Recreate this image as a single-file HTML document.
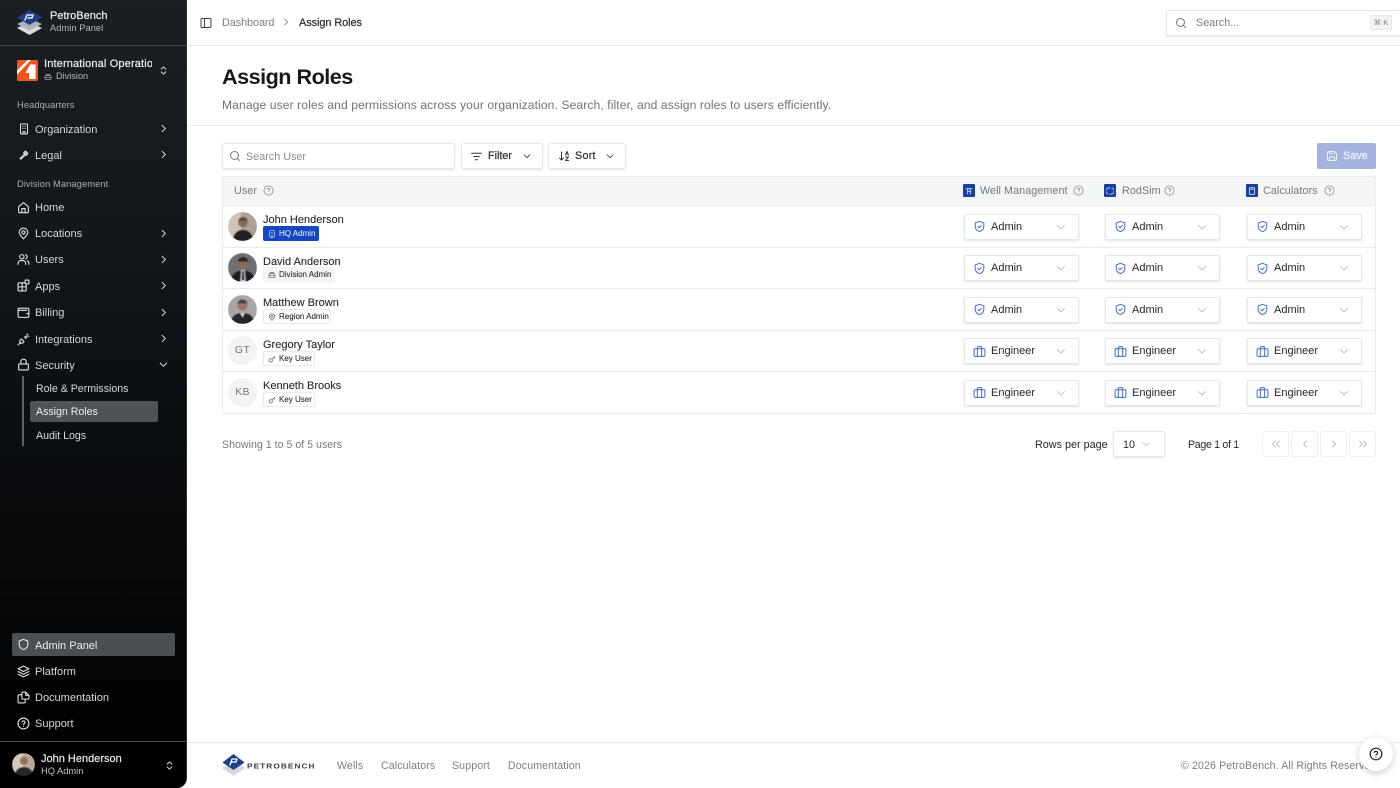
<!DOCTYPE html>
<html lang="en"><head><meta charset="utf-8"><title>Assign Roles</title>
<style>
*{box-sizing:border-box}
html,body{margin:0;padding:0;width:1400px;height:788px;overflow:hidden;background:#fff;font-family:"Liberation Sans",sans-serif;color:#17191c}
.a{position:absolute;white-space:nowrap}
svg{position:absolute;fill:none;stroke:currentColor;stroke-width:2;stroke-linecap:round;stroke-linejoin:round}
#side{position:absolute;left:0;top:0;width:187px;height:788px;background:linear-gradient(180deg,#1b1f24 0,#15191d 22%,#0d1013 50%,#040506 80%,#000 100%);border-right:1px solid #2c3035;border-bottom-right-radius:10px;color:#e2e4e6;overflow:hidden}
#side .n{font-size:11px;color:#d6d8da}
#side .s{font-size:10.600px;color:#d6d8da}
#side svg{color:#e4e6e8}
.m{-webkit-text-stroke:.2px currentColor}
.btn{position:absolute;background:#fff;border:1px solid #e6e8ea;border-radius:3px;box-shadow:0 1px 2px rgba(0,0,0,.1)}
.dd{position:absolute;width:115px;height:26px;background:#fff;border:1px solid #e4e6e8;border-radius:2px;box-shadow:0 1px 2px rgba(0,0,0,.12)}
.dd span{position:absolute;left:26px;top:6px;font-size:11px;color:#25282c}
.dd svg.i{left:8px;top:5.500px;width:13px;height:13px;color:#3f68c9;stroke-width:1.8}
.dd svg.c{left:90px;top:6px;width:12px;height:12px;color:#a9adb2;stroke-width:1.5}
.nm{position:absolute;left:263px;font-size:11px;color:#25282c;white-space:nowrap;-webkit-text-stroke:.1px currentColor}
.bd{position:absolute;left:263px;height:15px;border:1px solid #e8eaec;border-radius:2px;background:#fff;font-size:8px;color:#2b2e32;padding:2px 0 0 15px;white-space:nowrap;-webkit-text-stroke:.1px currentColor}
.bd svg{left:4px;top:3px;width:8px;height:8px;color:#555a60}
.ln{position:absolute;left:222px;width:1154px;height:1px;background:#e9ebec}
.av{position:absolute;left:228px;width:29px;height:29px;border-radius:50%;overflow:hidden}
.av svg{left:0;top:0;width:29px;height:29px;stroke:none;filter:blur(.5px)}
.ini{background:#f2f3f4;color:#73777c;font-size:10.500px;text-align:center;line-height:29px;letter-spacing:.3px}
.pg{position:absolute;top:431px;width:27px;height:26px;border:1px solid #eeeff1;border-radius:3px;background:#fff;color:#a5a8ad}
.pg svg{left:7px;top:6px;width:12px;height:12px;stroke-width:1.5}
.f{position:absolute;top:760px;font-size:10.600px;letter-spacing:.12px;color:#7a7e83;white-space:nowrap}
.th{position:absolute;top:185px;font-size:10.800px;letter-spacing:.05px;color:#75797e;white-space:nowrap}
.q{top:185px;width:11px;height:11px;color:#85898e;stroke-width:1.7}
.app{position:absolute;top:184px;width:12px;height:13px;background:#17409f;border-radius:1px}
.app svg{left:2px;top:2.500px;width:8px;height:8px;color:#dfe6f6;stroke-width:2.4}
</style></head><body>
<svg width="0" height="0" style="display:none">
<defs>
<symbol id="chev" viewBox="0 0 24 24"><path d="M9 5l7 7-7 7"/></symbol>
<symbol id="down" viewBox="0 0 24 24"><path d="M5 9l7 7 7-7"/></symbol>
<symbol id="updn" viewBox="0 0 24 24"><path d="M7 9l5-5 5 5M7 15l5 5 5-5"/></symbol>
<symbol id="shield" viewBox="0 0 24 24"><path d="M12 2.500l8 3v6c0 5-3.400 8.300-8 10-4.600-1.700-8-5-8-10v-6z"/><path d="M8.800 12l2.300 2.300 4.200-4.300"/></symbol>
<symbol id="brief" viewBox="0 0 24 24"><rect x="2" y="7" width="20" height="14" rx="2"/><path d="M8 21V5a2 2 0 0 1 2-2h4a2 2 0 0 1 2 2v16"/></symbol>
<symbol id="help" viewBox="0 0 24 24"><circle cx="12" cy="12" r="10"/><path d="M9 9.200a3 3 0 0 1 5.800 1c0 2-2.800 2.300-2.800 3.800"/><path d="M12 17.500h.01"/></symbol>
<symbol id="search" viewBox="0 0 24 24"><circle cx="11" cy="11" r="8"/><path d="M21 21l-4.300-4.300"/></symbol>
<symbol id="bld" viewBox="0 0 24 24"><rect x="5" y="2" width="14" height="20" rx="2"/><path d="M9 7h.01M12 7h.01M15 7h.01M9 11h.01M12 11h.01M15 11h.01M10 22v-5h4v5"/></symbol>
<symbol id="case" viewBox="0 0 24 24"><rect x="3" y="8" width="18" height="12" rx="2"/><path d="M7 8V6a2 2 0 0 1 2-2h6a2 2 0 0 1 2 2v2M3 13h18"/></symbol>
<symbol id="pin" viewBox="0 0 24 24"><path d="M12 22c5-5 8-8.500 8-12a8 8 0 0 0-16 0c0 3.500 3 7 8 12z"/><circle cx="12" cy="10" r="3"/></symbol>
<symbol id="key" viewBox="0 0 24 24"><circle cx="8" cy="16" r="5"/><path d="M12 12l8-8M17 7l3 3"/></symbol>
</defs></svg>

<div id="side">
  <svg style="left:16px;top:9px;width:27px;height:27px;stroke:none" viewBox="0 0 27 27"><path fill="#d9dcdf" d="M13.500 13L26 19 13.500 26 1 19z"/><path fill="#aeb3b8" d="M13.500 9L26 15 13.500 21.500 1 15z"/><path fill="#1d3f86" d="M13.500 1L26 8.500 13.500 16 1 8.500z"/><path fill="none" stroke="#e8ecf4" stroke-width="1.500" d="M9 11l2-5h6l-1 3h-4"/></svg>
  <div class="a m" style="left:50px;top:10px;font-size:11px;color:#eceef0">PetroBench</div>
  <div class="a" style="left:50px;top:23px;font-size:9.300px;letter-spacing:.05px;color:#b5b8bb">Admin Panel</div>
  <div style="position:absolute;left:0;top:45px;width:187px;height:1px;background:#44484c"></div>

  <svg style="left:17px;top:60px;width:21px;height:21px;stroke:none" viewBox="0 0 21 21"><rect width="21" height="21" rx="1.500" fill="#f0551c"/><path fill="#fff" d="M0 10.500L10.500 0H14L0 14.500z"/><path fill="#fff" d="M13 4.500h5.500V19H12v-6H8.500z"/></svg>
  <div class="a m" style="left:44px;top:58px;width:107.500px;overflow:hidden;font-size:11px;letter-spacing:.15px;color:#eceef0">International Operations</div>
  <svg style="left:44px;top:73px;width:8px;height:8px;color:#b5b8bb"><use href="#case"/></svg>
  <div class="a" style="left:56px;top:71px;font-size:9.200px;color:#b5b8bb">Division</div>
  <svg style="left:158px;top:64px;width:11px;height:13px"><use href="#updn"/></svg>

  <div class="a" style="left:17px;top:100px;font-size:9.300px;letter-spacing:.1px;color:#a9acb0">Headquarters</div>
  <svg style="left:18px;top:123px;width:12px;height:12px"><use href="#bld"/></svg><div class="a n" style="left:35px;top:123.500px">Organization</div><svg style="left:158px;top:123px;width:11px;height:11px"><use href="#chev"/></svg>
  <svg style="left:18px;top:149px;width:12px;height:12px" viewBox="0 0 24 24"><path d="M14 5l5 5M11 8l5 5M12 7l3-3 5 5-3 3zM13 10L4 19l1.500 1.500L15 12"/></svg><div class="a n" style="left:35px;top:150px">Legal</div><svg style="left:158px;top:149px;width:11px;height:11px"><use href="#chev"/></svg>

  <div class="a" style="left:17px;top:179px;font-size:9.300px;letter-spacing:.1px;color:#a9acb0">Division Management</div>
  <svg style="left:17px;top:201px;width:13px;height:13px" viewBox="0 0 24 24"><path d="M3 10.500L12 3l9 7.500V20a1.500 1.500 0 0 1-1.500 1.500h-15A1.500 1.500 0 0 1 3 20z"/><path d="M9 21v-7h6v7"/></svg><div class="a n" style="left:35px;top:202px">Home</div>
  <svg style="left:17px;top:227px;width:13px;height:13px"><use href="#pin"/></svg><div class="a n" style="left:35px;top:228px">Locations</div><svg style="left:158px;top:228px;width:11px;height:11px"><use href="#chev"/></svg>
  <svg style="left:17px;top:253px;width:13px;height:13px" viewBox="0 0 24 24"><circle cx="9" cy="7" r="4"/><path d="M2 21v-2a5 5 0 0 1 5-5h4a5 5 0 0 1 5 5v2M16 3.200a4 4 0 0 1 0 7.600M22 21v-2a5 5 0 0 0-3-4.500"/></svg><div class="a n" style="left:35px;top:254px">Users</div><svg style="left:158px;top:254px;width:11px;height:11px"><use href="#chev"/></svg>
  <svg style="left:17px;top:279px;width:13px;height:13px" viewBox="0 0 24 24"><rect x="2" y="7" width="15" height="15" rx="2"/><path d="M2 14.500h15M9.500 7v15"/><rect x="15" y="2" width="7" height="7" rx="1" fill="#15191d"/></svg><div class="a n" style="left:35px;top:281px">Apps</div><svg style="left:158px;top:280px;width:11px;height:11px"><use href="#chev"/></svg>
  <svg style="left:17px;top:306px;width:13px;height:13px" viewBox="0 0 24 24"><rect x="2" y="4" width="20" height="17" rx="2.500"/><path d="M2 8h16M22 14h-4"/></svg><div class="a n" style="left:35px;top:307px">Billing</div><svg style="left:158px;top:307px;width:11px;height:11px"><use href="#chev"/></svg>
  <svg style="left:17px;top:333px;width:13px;height:13px" viewBox="0 0 24 24"><path d="M2 22l5-5M8 11l5 5-2 2a3.500 3.500 0 0 1-5-5zM14 8l2-2 2 2-2 2M20 2l-2 2M22 6h-2"/></svg><div class="a n" style="left:35px;top:333.500px">Integrations</div><svg style="left:158px;top:333px;width:11px;height:11px"><use href="#chev"/></svg>
  <svg style="left:17px;top:358px;width:13px;height:13px" viewBox="0 0 24 24"><rect x="3" y="11" width="18" height="11" rx="2"/><path d="M7 11V7a5 5 0 0 1 10 0v4"/></svg><div class="a n" style="left:35px;top:360px">Security</div><svg style="left:158px;top:359px;width:11px;height:11px"><use href="#down"/></svg>
  <div style="position:absolute;left:22px;top:376px;width:2px;height:70px;background:#5d6166"></div>
  <div class="a s" style="left:36px;top:383px">Role &amp; Permissions</div>
  <div style="position:absolute;left:30px;top:401px;width:128px;height:21px;border-radius:2px;background:#4f5257"></div>
  <div class="a s" style="left:36px;top:406px;color:#eceef0">Assign Roles</div>
  <div class="a s" style="left:36px;top:430px">Audit Logs</div>

  <div style="position:absolute;left:12px;top:633px;width:163px;height:23px;border-radius:2px;background:#4b4f53"></div>
  <svg style="left:17px;top:638px;width:13px;height:13px" viewBox="0 0 24 24"><path d="M12 2.500l8 3v6c0 5-3.400 8.300-8 10-4.600-1.700-8-5-8-10v-6z"/></svg><div class="a n" style="left:35px;top:640px;color:#eceef0">Admin Panel</div>
  <svg style="left:17px;top:665px;width:13px;height:13px" viewBox="0 0 24 24"><path d="M12 2l10 5-10 5L2 7zM2 12l10 5 10-5M2 17l10 5 10-5"/></svg><div class="a n" style="left:35px;top:666px">Platform</div>
  <svg style="left:17px;top:691px;width:13px;height:13px" viewBox="0 0 24 24"><path d="M9 7H4a2 2 0 0 0-2 2v11a2 2 0 0 0 2 2h9a2 2 0 0 0 2-2v-5"/><path d="M9 4a2 2 0 0 1 2-2h5l6 6v5a2 2 0 0 1-2 2h-9a2 2 0 0 1-2-2zM16 2v6h6"/></svg><div class="a n" style="left:35px;top:692px">Documentation</div>
  <svg style="left:17px;top:717px;width:13px;height:13px"><use href="#help"/></svg><div class="a n" style="left:35px;top:718px">Support</div>
  <div style="position:absolute;left:0;top:741px;width:187px;height:1px;background:#45484c"></div>
  <div class="av" style="left:12px;top:753px;width:23px;height:23px"><svg style="width:23px;height:23px" viewBox="0 0 29 29"><rect width="29" height="29" fill="#b9a896"/><rect width="14" height="29" fill="#d3c8bc"/><circle cx="15" cy="10" r="5" fill="#94705c"/><path d="M4 29c0-8 5-11 11-11s11 3 11 11z" fill="#25272a"/></svg></div>
  <div class="a m" style="left:41px;top:753px;font-size:11px;color:#e7e9eb">John Henderson</div>
  <div class="a" style="left:41px;top:766px;font-size:9.300px;color:#c0c3c6">HQ Admin</div>
  <svg style="left:164px;top:759px;width:11px;height:13px"><use href="#updn"/></svg>
</div>

<!-- top bar -->
<svg style="left:200px;top:17px;width:12px;height:12px;color:#3d4146" viewBox="0 0 24 24"><rect x="2" y="3" width="20" height="18" rx="2"/><path d="M9 3v18"/></svg>
<div class="a" style="left:222px;top:17px;font-size:10.900px;letter-spacing:-.1px;color:#7b7f84">Dashboard</div>
<svg style="left:281px;top:17px;width:10px;height:10px;color:#777b80"><use href="#chev"/></svg>
<div class="a m" style="left:299px;top:17px;font-size:10.900px;letter-spacing:-.05px;color:#25282c">Assign Roles</div>
<div class="btn" style="left:1166px;top:10px;width:234px;height:26px;border-right:none;border-radius:2px 0 0 2px"></div>
<svg style="left:1175px;top:17px;width:12px;height:12px;color:#6f7378"><use href="#search"/></svg>
<div class="a" style="left:1196px;top:17px;font-size:10.800px;color:#7b7f84">Search...</div>
<div class="a" style="left:1370px;top:15px;width:22px;height:15px;background:#f2f3f4;border:1px solid #e6e7e9;border-radius:2px;font-size:7.500px;line-height:13px;text-align:center;color:#7b7f84">⌘ K</div>
<div style="position:absolute;left:187px;top:45px;width:1213px;height:1px;background:#e8eaec"></div>

<!-- heading -->
<div class="a" style="left:222px;top:64px;font-size:21.600px;font-weight:bold;letter-spacing:-.5px;color:#17191c">Assign Roles</div>
<div class="a" style="left:222px;top:98px;font-size:12.100px;letter-spacing:.1px;color:#6f7378">Manage user roles and permissions across your organization. Search, filter, and assign roles to users efficiently.</div>
<div style="position:absolute;left:187px;top:125px;width:1213px;height:1px;background:#e8eaec"></div>

<!-- toolbar -->
<div class="btn" style="left:222px;top:143px;width:233px;height:26px"></div>
<svg style="left:229px;top:150px;width:12px;height:12px;color:#777b80"><use href="#search"/></svg>
<div class="a" style="left:246px;top:151px;font-size:10.800px;color:#8a8e93">Search User</div>
<div class="btn" style="left:461px;top:143px;width:82px;height:26px"></div>
<svg style="left:470px;top:150px;width:13px;height:13px;color:#33373b" viewBox="0 0 24 24"><path d="M3 6h18M7 12h10M10 18h4"/></svg>
<div class="a m" style="left:488px;top:150px;font-size:10.800px;color:#2b2e32">Filter</div>
<svg style="left:522px;top:151px;width:10px;height:10px;color:#33373b"><use href="#down"/></svg>
<div class="btn" style="left:548px;top:143px;width:78px;height:26px"></div>
<svg style="left:558px;top:150px;width:12px;height:12px;color:#33373b" viewBox="0 0 24 24"><path d="M7 4v16M3 16l4 4 4-4M15 10l3-7 3 7M16 8h4M15 14h6l-6 7h6"/></svg>
<div class="a m" style="left:575px;top:150px;font-size:10.800px;letter-spacing:.25px;color:#2b2e32">Sort</div>
<svg style="left:605px;top:151px;width:10px;height:10px;color:#33373b"><use href="#down"/></svg>
<div style="position:absolute;left:1317px;top:143px;width:59px;height:26px;background:#a3b4e0;border-radius:2px"></div>
<svg style="left:1326px;top:150px;width:12px;height:12px;color:#eef1f9" viewBox="0 0 24 24"><path d="M5 3h11l5 5v11a2 2 0 0 1-2 2H5a2 2 0 0 1-2-2V5a2 2 0 0 1 2-2z"/><path d="M17 21v-7H7v7M7 3v4h7"/></svg>
<div class="a m" style="left:1343px;top:150px;font-size:10.800px;color:#eef1f9">Save</div>

<!-- table -->
<div style="position:absolute;left:222px;top:176px;width:1154px;height:238px;border:1px solid #e9ebec;border-radius:2px"></div>
<div style="position:absolute;left:223px;top:177px;width:1152px;height:28px;background:#f4f5f5"></div>
<div class="ln" style="top:205px"></div><div class="ln" style="top:247px"></div><div class="ln" style="top:288px"></div><div class="ln" style="top:330px"></div><div class="ln" style="top:371px"></div>

<div class="th" style="left:234px">User</div>
<svg class="q" style="left:263px"><use href="#help"/></svg>
<div class="app" style="left:963px"><svg viewBox="0 0 24 24"><path d="M3 5h18M8 5v16M16 5v16M8 13h8"/></svg></div>
<div class="th" style="left:980px">Well Management</div><svg class="q" style="left:1073px"><use href="#help"/></svg>
<div class="app" style="left:1104px"><svg viewBox="0 0 24 24"><path d="M6 21a8 8 0 0 1 6-18M18 3a8 8 0 0 1-6 18"/></svg></div>
<div class="th" style="left:1122px">RodSim</div><svg class="q" style="left:1164px"><use href="#help"/></svg>
<div class="app" style="left:1246px"><svg viewBox="0 0 24 24"><rect x="4" y="2" width="16" height="20" rx="3"/><path d="M8 7h8"/></svg></div>
<div class="th" style="left:1263px">Calculators</div><svg class="q" style="left:1324px"><use href="#help"/></svg>

<!-- users -->
<div class="av" style="top:212px"><svg viewBox="0 0 29 29"><rect width="29" height="29" fill="#b0a292"/><rect width="13" height="29" fill="#cfc3b6"/><circle cx="15" cy="10.500" r="4.800" fill="#8f6c58"/><path d="M15 5a4.800 4.800 0 0 1 4.800 4h-9.600A4.800 4.800 0 0 1 15 5z" fill="#5c4a3f"/><path d="M5 29c0-7 4.500-11 10-11s10 4 10 11z" fill="#1f2124"/></svg></div>
<div class="nm" style="top:213.500px">John Henderson</div>
<div class="bd" style="top:226px;width:56px;background:#1547c0;border-color:#1547c0;color:#dfe7fa"><svg style="color:#cfdaf5"><use href="#bld"/></svg>HQ Admin</div>

<div class="av" style="top:253px"><svg viewBox="0 0 29 29"><rect width="29" height="29" fill="#6e7073"/><circle cx="15" cy="10.500" r="5.200" fill="#8c6a57"/><path d="M15 4a5.200 5.200 0 0 1 5.200 4.500H9.800A5.200 5.200 0 0 1 15 4z" fill="#2b2523"/><path d="M3 29c0-8 6-11.500 12-11.500s12 3.500 12 11.500z" fill="#1c1e22"/><path d="M13 17h4l1 12h-6z" fill="#d8d9db"/><path d="M14.300 18h1.500l.7 9h-2.900z" fill="#33363b"/></svg></div>
<div class="nm" style="top:255.500px">David Anderson</div>
<div class="bd" style="top:267px;width:72px;background:#f4f5f5;border-color:#f1f2f3"><svg><use href="#case"/></svg>Division Admin</div>

<div class="av" style="top:295px"><svg viewBox="0 0 29 29"><rect width="29" height="29" fill="#a5a6a7"/><circle cx="14.500" cy="10.500" r="5" fill="#9b7560"/><path d="M14.500 4.500a5 5 0 0 1 5 4h-10a5 5 0 0 1 5-4z" fill="#4c4440"/><path d="M3 29c0-8 5-11 11.500-11S26 21 26 29z" fill="#24262a"/><path d="M12 18h5l-2.500 5z" fill="#d8d8da"/></svg></div>
<div class="nm" style="top:296.500px">Matthew Brown</div>
<div class="bd" style="top:309px;width:68px"><svg><use href="#pin"/></svg>Region Admin</div>

<div class="av ini" style="top:336px">GT</div>
<div class="nm" style="top:338.500px">Gregory Taylor</div>
<div class="bd" style="top:351px;width:52px"><svg><use href="#key"/></svg>Key User</div>

<div class="av ini" style="top:378px">KB</div>
<div class="nm" style="top:379.500px">Kenneth Brooks</div>
<div class="bd" style="top:392px;width:52px"><svg><use href="#key"/></svg>Key User</div>

<!-- dropdowns -->
<div class="dd" style="left:964px;top:213.500px"><svg class="i"><use href="#shield"/></svg><span>Admin</span><svg class="c"><use href="#down"/></svg></div>
<div class="dd" style="left:1105px;top:213.500px"><svg class="i"><use href="#shield"/></svg><span>Admin</span><svg class="c"><use href="#down"/></svg></div>
<div class="dd" style="left:1247px;top:213.500px"><svg class="i"><use href="#shield"/></svg><span>Admin</span><svg class="c"><use href="#down"/></svg></div>
<div class="dd" style="left:964px;top:255px"><svg class="i"><use href="#shield"/></svg><span>Admin</span><svg class="c"><use href="#down"/></svg></div>
<div class="dd" style="left:1105px;top:255px"><svg class="i"><use href="#shield"/></svg><span>Admin</span><svg class="c"><use href="#down"/></svg></div>
<div class="dd" style="left:1247px;top:255px"><svg class="i"><use href="#shield"/></svg><span>Admin</span><svg class="c"><use href="#down"/></svg></div>
<div class="dd" style="left:964px;top:296.500px"><svg class="i"><use href="#shield"/></svg><span>Admin</span><svg class="c"><use href="#down"/></svg></div>
<div class="dd" style="left:1105px;top:296.500px"><svg class="i"><use href="#shield"/></svg><span>Admin</span><svg class="c"><use href="#down"/></svg></div>
<div class="dd" style="left:1247px;top:296.500px"><svg class="i"><use href="#shield"/></svg><span>Admin</span><svg class="c"><use href="#down"/></svg></div>
<div class="dd" style="left:964px;top:338px"><svg class="i"><use href="#brief"/></svg><span>Engineer</span><svg class="c"><use href="#down"/></svg></div>
<div class="dd" style="left:1105px;top:338px"><svg class="i"><use href="#brief"/></svg><span>Engineer</span><svg class="c"><use href="#down"/></svg></div>
<div class="dd" style="left:1247px;top:338px"><svg class="i"><use href="#brief"/></svg><span>Engineer</span><svg class="c"><use href="#down"/></svg></div>
<div class="dd" style="left:964px;top:379.500px"><svg class="i"><use href="#brief"/></svg><span>Engineer</span><svg class="c"><use href="#down"/></svg></div>
<div class="dd" style="left:1105px;top:379.500px"><svg class="i"><use href="#brief"/></svg><span>Engineer</span><svg class="c"><use href="#down"/></svg></div>
<div class="dd" style="left:1247px;top:379.500px"><svg class="i"><use href="#brief"/></svg><span>Engineer</span><svg class="c"><use href="#down"/></svg></div>

<!-- pagination -->
<div class="a" style="left:222px;top:439px;font-size:10.600px;letter-spacing:.02px;color:#75797e">Showing 1 to 5 of 5 users</div>
<div class="a" style="left:1035px;top:439px;font-size:10.800px;color:#25282c">Rows per page</div>
<div class="btn" style="left:1113px;top:431px;width:52px;height:26px"></div>
<div class="a" style="left:1123px;top:439px;font-size:10.800px;color:#25282c">10</div>
<svg style="left:1141px;top:439px;width:10px;height:10px;color:#a9adb2;stroke-width:1.500"><use href="#down"/></svg>
<div class="a" style="left:1188px;top:439px;font-size:10.600px;letter-spacing:-.3px;color:#25282c">Page 1 of 1</div>
<div class="pg" style="left:1262px"><svg viewBox="0 0 24 24"><path d="M11 6l-6 6 6 6M19 6l-6 6 6 6"/></svg></div>
<div class="pg" style="left:1291px"><svg viewBox="0 0 24 24"><path d="M15 6l-6 6 6 6"/></svg></div>
<div class="pg" style="left:1320px"><svg viewBox="0 0 24 24"><path d="M9 6l6 6-6 6"/></svg></div>
<div class="pg" style="left:1349px"><svg viewBox="0 0 24 24"><path d="M5 6l6 6-6 6M13 6l6 6-6 6"/></svg></div>

<!-- footer -->
<div style="position:absolute;left:187px;top:742px;width:1213px;height:1px;background:#e8eaec"></div>
<svg style="left:222px;top:753px;width:23px;height:24px;stroke:none" viewBox="0 0 23 24"><path fill="#d6d8da" d="M11.500 8L23 15l-11.500 8L0 15z"/><path fill="#1d3f86" d="M11.500 1L22.500 9.500 11.500 17 .5 9.500z"/><path fill="none" stroke="#fff" stroke-width="1.300" d="M8 12l2-6h5l-1 3h-4"/></svg>
<div class="a" style="left:247px;top:761px;font-size:8.300px;letter-spacing:1.050px;font-weight:bold;color:#3a4048;transform:scaleY(.85)">PETROBENCH</div>
<div class="f" style="left:337px">Wells</div>
<div class="f" style="left:381px">Calculators</div>
<div class="f" style="left:452px">Support</div>
<div class="f" style="left:508px">Documentation</div>
<div class="f" style="left:1181px">© 2026 PetroBench. All Rights Reserved.</div>
<div style="position:absolute;left:1359px;top:737px;width:34px;height:34px;border-radius:50%;background:#fff;box-shadow:0 2px 8px rgba(0,0,0,.2)"></div>
<svg style="left:1369px;top:747px;width:14px;height:14px;color:#1b1d20;stroke-width:2"><use href="#help"/></svg>
</body></html>
